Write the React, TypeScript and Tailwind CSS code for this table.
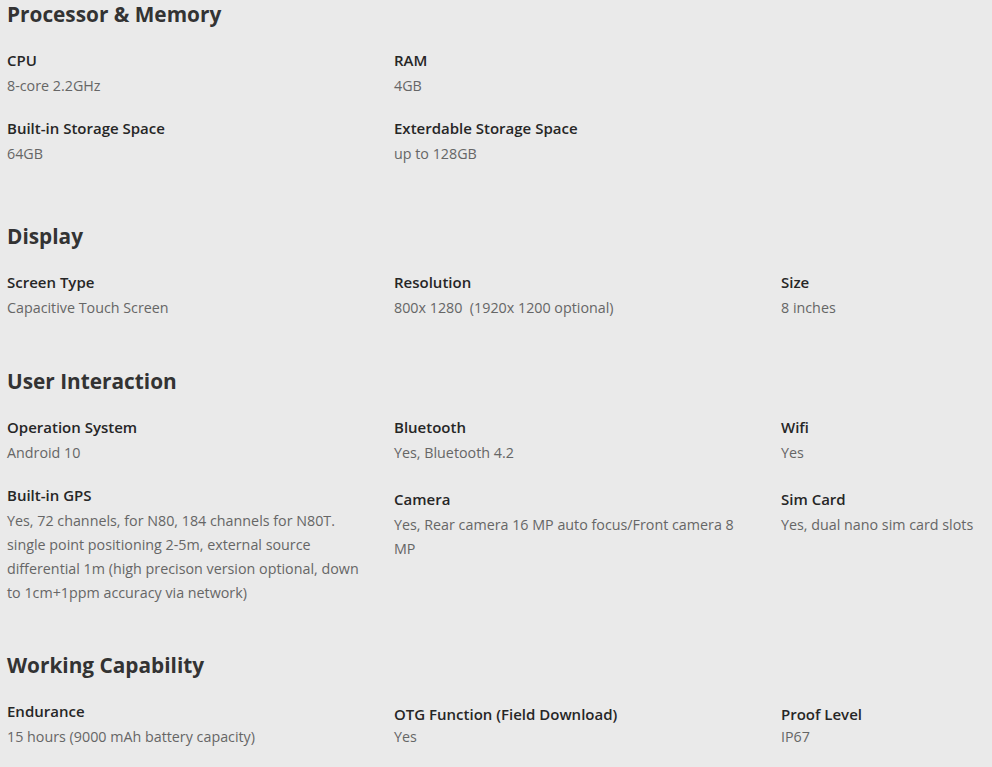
type Spec = { label: string; value: string; shift?: string; valueShift?: string };

const sections: { title: string; extra?: string; rows: Spec[][] }[] = [
  {
    title: 'Processor & Memory',
    rows: [
      [
        { label: 'CPU', value: '8-core 2.2GHz' },
        { label: 'RAM', value: '4GB' },
      ],
      [
        { label: 'Built-in Storage Space', value: '64GB' },
        { label: 'Exterdable Storage Space', value: 'up to 128GB' },
      ],
    ],
  },
  {
    title: 'Display',
    extra: 'mt-[56px]',
    rows: [
      [
        { label: 'Screen Type', value: 'Capacitive Touch Screen' },
        { label: 'Resolution', value: '800x 1280\u00a0\u00a0(1920x 1200 optional)' },
        { label: 'Size', value: '8 inches' },
      ],
    ],
  },
  {
    title: 'User Interaction',
    extra: 'mt-[47px]',
    rows: [
      [
        { label: 'Operation System', value: 'Android 10' },
        { label: 'Bluetooth', value: 'Yes, Bluetooth 4.2' },
        { label: 'Wifi', value: 'Yes' },
      ],
      [
        {
          label: 'Built-in GPS',
          value:
            'Yes, 72 channels, for N80, 184 channels for N80T. single point positioning 2-5m, external source differential 1m (high precison version optional, down to 1cm+1ppm accuracy via network)',
        },
        { label: 'Camera', value: 'Yes, Rear camera 16 MP auto focus/Front camera 8 MP', shift: 'mt-[4px]' },
        { label: 'Sim Card', value: 'Yes, dual nano sim card slots', shift: 'mt-[4px]' },
      ],
    ],
  },
  {
    title: 'Working Capability',
    extra: 'mt-[46px]',
    rows: [
      [
        { label: 'Endurance', value: '15 hours (9000 mAh battery capacity)' },
        { label: 'OTG Function (Field Download)', value: 'Yes', shift: 'mt-[3px]', valueShift: '-mt-[1px]' },
        { label: 'Proof Level', value: 'IP67', shift: 'mt-[3px]', valueShift: '-mt-[1px]' },
      ],
    ],
  },
];

export default function App() {
  return (
    <div className="min-h-[767px] w-[992px] overflow-hidden bg-[#eaeaea] pl-[7px] font-['Open_Sans',sans-serif]">
      {sections.map((s) => (
        <section key={s.title} className={s.extra}>
          <h2 className="text-[20.8px] leading-[28px] font-bold text-[#333]">{s.title}</h2>
          <div className="mt-[20px] flex flex-col gap-[18px]">
            {s.rows.map((row, i) => (
              <div key={i} className="grid grid-cols-[387px_387px_211px]">
                {row.map((item, j) => (
                  <div key={item.label} className={`${j < 2 ? 'pr-[26px]' : ''} ${item.shift ?? ''}`}>
                    <div className="text-[15px] leading-6 font-semibold text-[#262626]">{item.label}</div>
                    <div className={`text-[14.3px] leading-6 text-[#666] ${item.valueShift ?? 'mt-[2px]'}`}>
                      {item.value}
                    </div>
                  </div>
                ))}
              </div>
            ))}
          </div>
        </section>
      ))}
    </div>
  );
}
